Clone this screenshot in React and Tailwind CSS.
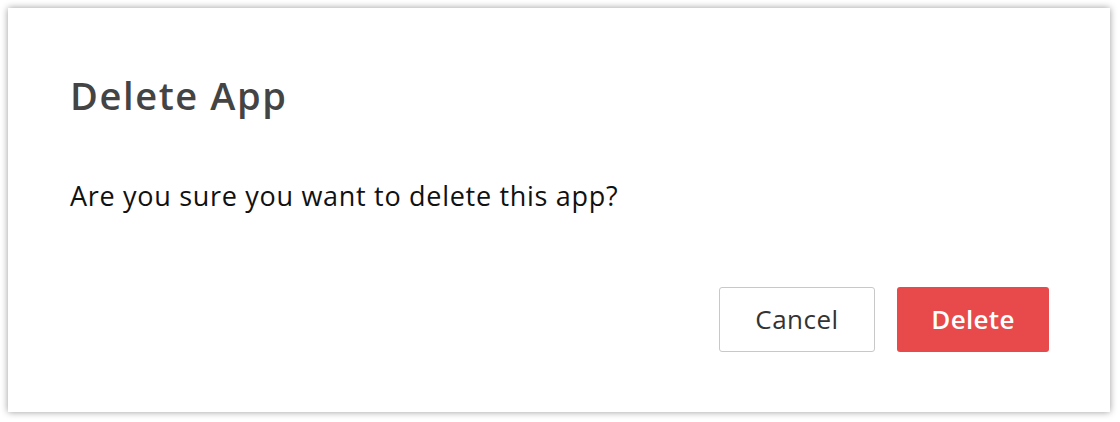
import React from 'react'

export default function App() {
  return (
    <div className="w-[1120px] h-[422px] bg-white pt-2 pl-2" style={{ fontFamily: '"Open Sans", Lato, sans-serif' }}>
      <div className="w-[1102px] h-[404px] bg-white shadow-[0_0_7px_rgba(0,0,0,0.4)] flex flex-col pl-[62px] pr-[61px]">
        <h1 className="mt-[65px] text-[38px] leading-[44px] font-semibold tracking-[1.6px] text-[#444444]">Delete App</h1>
        <p className="mt-[64px] text-[27px] leading-[30px] tracking-[0.7px] text-[#111111]">Are you sure you want to delete this app?</p>
        <div className="mt-auto mb-[60px] flex justify-end gap-[22px]">
          <button className="w-[156px] h-[65px] rounded-[3px] border border-[#c8c8c8] bg-white text-[26px] tracking-[0.5px] text-[#333333]">Cancel</button>
          <button className="w-[152px] h-[65px] rounded-[3px] bg-[#e8494b] text-[26px] font-semibold tracking-[0.3px] text-white">Delete</button>
        </div>
      </div>
    </div>
  )
}
